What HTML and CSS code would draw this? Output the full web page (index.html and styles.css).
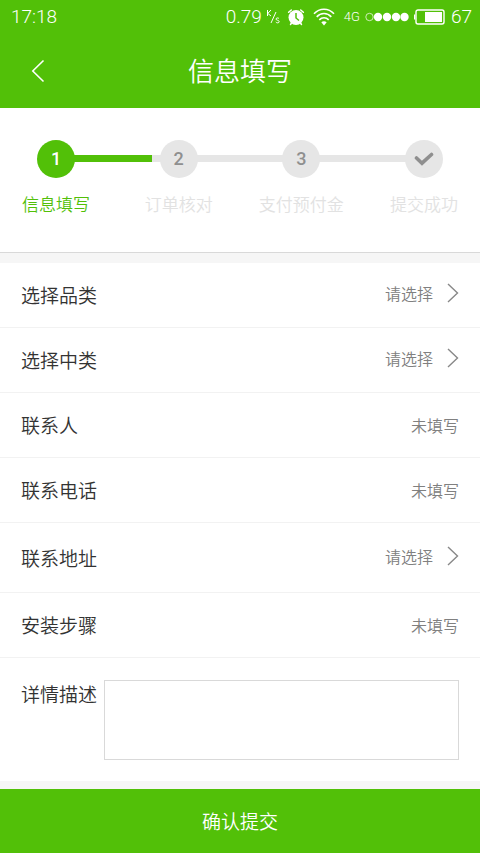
FILE: index.html
```html
<!DOCTYPE html>
<html lang="zh-CN">
<head>
<meta charset="utf-8">
<meta name="viewport" content="width=device-width, initial-scale=1">
<title>信息填写</title>
<link rel="stylesheet" href="styles.css">
</head>
<body>
<header class="header">
  <div class="status">
    <span class="status-text">17:18</span>
    <div class="status-right">
      <span class="status-text">0.79</span>
      <svg class="rate" width="14" height="16" viewBox="0 0 14 16" aria-hidden="true">
        <path d="M1.500 1v6M5 1L1.800 4.400L5 7M10 3L5 14M13 9.600c-.6-1-3-.9-3 .5c0 1.500 3.200.9 3.200 2.600c0 1.500-2.700 1.500-3.400.3"/>
      </svg>
      <svg class="alarm" width="18" height="18" viewBox="0 0 18 18" aria-hidden="true">
        <circle cx="9" cy="9.500" r="7.500" fill="#fff"/>
        <path d="M1.600 4.300L4.300 2M16.400 4.300L13.700 2M4.500 15L3.500 16.500M13.500 15L14.500 16.500" stroke="#fff" stroke-width="1.500" stroke-linecap="round"/>
        <path d="M9 5v5l3 2.500" fill="none" stroke="#52c008" stroke-width="1.500"/>
      </svg>
      <svg class="wifi" width="22" height="18" viewBox="0 0 22 18" aria-hidden="true">
        <path d="M1 5.800C6.500-.2 15.500-.2 21 5.800M3.700 8.900c4-4.500 10.600-4.500 14.600 0M6.300 11.900c2.700-2.900 6.700-2.900 9.400 0" fill="none" stroke="#fff" stroke-width="1.600"/>
        <path d="M8.300 14.300c1.600-1.500 3.800-1.500 5.400 0L11 17.500z" fill="#fff"/>
      </svg>
      <span class="network">4G</span>
      <svg class="signal" width="44" height="10" viewBox="0 0 44 10" aria-hidden="true">
        <circle cx="4.500" cy="5" r="3.700" fill="none" stroke="#fff" stroke-width=".7"/>
        <g fill="#fff"><circle cx="13" cy="5" r="4.200"/><circle cx="22" cy="5" r="4.200"/><circle cx="31" cy="5" r="4.200"/><circle cx="39.500" cy="5" r="4.200"/></g>
      </svg>
      <svg class="battery" width="31" height="16" viewBox="0 0 31 16" aria-hidden="true">
        <rect x="2" y="1" width="28" height="14" rx="2" fill="none" stroke="#fff" stroke-width="1.400"/>
        <path d="M.6 5.500v5" stroke="#fff" stroke-width="1.200"/>
        <rect x="11" y="3" width="17" height="10" fill="#fff"/>
      </svg>
      <span class="status-text">67</span>
    </div>
  </div>
  <nav class="nav">
    <button class="back" type="button" aria-label="返回">
      <svg width="14" height="24" viewBox="0 0 14 24" aria-hidden="true"><path d="M12.500 1.500L1.800 12L12.500 22.500" fill="none" stroke="#fff" stroke-width="1.600"/></svg>
    </button>
    <h1 class="title">信息填写</h1>
  </nav>
</header>

<main class="main">
  <section class="stepper">
    <div class="track"><div class="track-done" style="width: 26%"></div></div>
    <ol class="steps">
      <li class="step active"><span class="dot">1</span><span class="step-name">信息填写</span></li>
      <li class="step"><span class="dot">2</span><span class="step-name">订单核对</span></li>
      <li class="step"><span class="dot">3</span><span class="step-name">支付预付金</span></li>
      <li class="step"><span class="dot"><svg width="20" height="14" viewBox="0 0 20 14" aria-hidden="true"><path d="M2.500 6L8 11.200L17.500 2.500" fill="none" stroke="#8f8f8f" stroke-width="3.600" stroke-linecap="round"/></svg></span><span class="step-name">提交成功</span></li>
    </ol>
  </section>

  <form class="form" id="order">
    <div class="row">
      <label class="label" for="category">选择品类</label>
      <div class="picker"><select class="value" id="category"><option>请选择</option></select><svg class="chevron" width="12" height="20" viewBox="0 0 12 20" aria-hidden="true"><path d="M1 1L10.500 10L1 19"/></svg></div>
    </div>
    <div class="row">
      <label class="label" for="subcategory">选择中类</label>
      <div class="picker"><select class="value" id="subcategory"><option>请选择</option></select><svg class="chevron" width="12" height="20" viewBox="0 0 12 20" aria-hidden="true"><path d="M1 1L10.500 10L1 19"/></svg></div>
    </div>
    <div class="row">
      <label class="label" for="contact">联系人</label>
      <input class="value" id="contact" type="text" placeholder="未填写">
    </div>
    <div class="row">
      <label class="label" for="phone">联系电话</label>
      <input class="value" id="phone" type="tel" placeholder="未填写">
    </div>
    <div class="row tall">
      <label class="label" for="address">联系地址</label>
      <div class="picker"><select class="value" id="address"><option>请选择</option></select><svg class="chevron" width="12" height="20" viewBox="0 0 12 20" aria-hidden="true"><path d="M1 1L10.500 10L1 19"/></svg></div>
    </div>
    <div class="row">
      <label class="label" for="install">安装步骤</label>
      <input class="value" id="install" type="text" placeholder="未填写">
    </div>
    <div class="row detail">
      <label class="label" for="description">详情描述</label>
      <textarea class="description" id="description"></textarea>
    </div>
  </form>
</main>

<button class="submit" type="submit" form="order">确认提交</button>
</body>
</html>
```
FILE: styles.css
```css
* {
  box-sizing: border-box;
}

body {
  margin: 0;
  min-height: 100vh;
  display: flex;
  flex-direction: column;
  background: #f6f6f6;
  color: #333;
  font-family: "Noto Sans CJK SC", sans-serif;
  font-weight: 350;
}

button,
input,
select,
textarea {
  font: inherit;
}

svg {
  display: block;
  flex: none;
}

.header {
  background: #52c008;
  color: #fff;
}

.status {
  display: flex;
  justify-content: space-between;
  align-items: center;
  height: 34px;
  padding: 0 8px 0 11px;
}

.status-right {
  display: flex;
  align-items: center;
}

.status-text {
  font: 300 19px/24px Roboto, sans-serif;
}

.rate {
  margin: 0 7px 0 4px;
  fill: none;
  stroke: #fff;
}

.alarm {
  margin-right: 8px;
}

.wifi {
  margin-right: 9px;
}

.network {
  margin-right: 5px;
  font: 300 13px/16px Roboto, sans-serif;
}

.signal {
  margin-right: 5px;
}

.battery {
  margin-right: 6px;
}

.nav {
  display: grid;
  grid-template-columns: 72px 1fr 72px;
  align-items: center;
  height: 74px;
}

.back {
  display: flex;
  align-items: center;
  height: 48px;
  padding: 0 0 0 31px;
  border: 0;
  background: none;
}

.title {
  margin: 0;
  padding-bottom: 2px;
  text-align: center;
  font-size: 26px;
  line-height: 40px;
  font-weight: 350;
}

.main {
  flex: 1;
}

.stepper {
  display: grid;
  height: 145px;
  padding: 32px 22px 0;
  border-bottom: 1px solid #d9d9d9;
  background: #fff;
}

.track,
.steps {
  grid-area: 1 / 1;
}

.track {
  height: 7px;
  margin: 15px 34px 0;
  background: #e6e6e6;
}

.track-done {
  height: 100%;
  background: #52c008;
}

.steps {
  display: flex;
  justify-content: space-between;
  margin: 0;
  padding: 0;
  list-style: none;
}

.step {
  display: flex;
  flex-direction: column;
  align-items: center;
  gap: 14px;
  width: 68px;
  color: #e2e2e2;
}

.dot {
  display: flex;
  align-items: center;
  justify-content: center;
  width: 38px;
  height: 38px;
  border-radius: 50%;
  background: #e6e6e6;
  color: #8f8f8f;
  font: 500 18px/24px Roboto, sans-serif;
}

.step-name {
  font-size: 17px;
  line-height: 24px;
  white-space: nowrap;
}

.active {
  color: #52c008;
}

.active .dot {
  background: #52c008;
  color: #fff;
}

.form {
  margin-top: 10px;
  background: #fff;
}

.row {
  display: flex;
  align-items: center;
  gap: 7px;
  height: 65px;
  padding: 0 21px;
  border-bottom: 1px solid #f2f2f2;
}

.tall {
  height: 70px;
}

.label {
  flex: none;
  font-size: 19px;
  line-height: 28px;
}

.picker {
  flex: 1;
  display: flex;
  align-items: center;
  gap: 14px;
  padding-bottom: 4px;
}

.value {
  flex: 1;
  min-width: 0;
  height: 28px;
  padding: 0;
  border: 0;
  background: none;
  appearance: none;
  color: #808080;
  font-size: 16px;
  text-align: right;
  text-align-last: right;
}

.value::placeholder {
  color: #808080;
  opacity: 1;
}

.chevron {
  fill: none;
  stroke: #888;
  stroke-width: 1.4;
}

.detail {
  height: auto;
  align-items: flex-start;
  padding-top: 22px;
  padding-bottom: 21px;
  border-bottom: 0;
}

.description {
  flex: 1;
  min-width: 0;
  height: 80px;
  padding: 8px;
  border: 1px solid #d9d9d9;
  border-radius: 0;
  resize: none;
  font-size: 16px;
}

.submit {
  height: 64px;
  padding: 0 0 2px;
  border: 0;
  background: #52c008;
  color: #fff;
  font-size: 19px;
}
```
